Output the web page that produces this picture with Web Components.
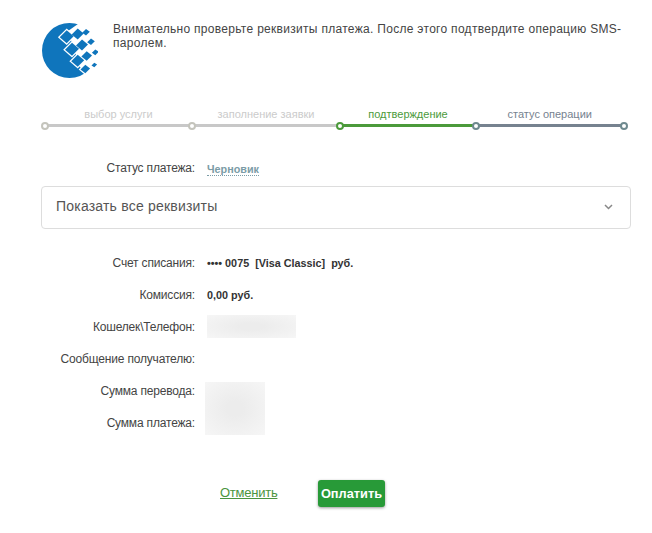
<!DOCTYPE html>
<html lang="ru">
<head>
<meta charset="utf-8">
<title>Подтверждение</title>
<style>
  html, body { margin: 0; background: #fff; }
  body { font-family: "Liberation Sans", Arial, sans-serif; color: #444; }
</style>
</head>
<body>
<wm-page>
  <wm-notice>Внимательно проверьте реквизиты платежа. После этого подтвердите операцию SMS-паролем.</wm-notice>
  <wm-stepper>
    <wm-step state="done">выбор услуги</wm-step>
    <wm-step state="done">заполнение заявки</wm-step>
    <wm-step state="active">подтверждение</wm-step>
    <wm-step state="next" last>статус операции</wm-step>
  </wm-stepper>
  <wm-status label="Статус платежа:">Черновик</wm-status>
  <wm-accordion>Показать все реквизиты</wm-accordion>
  <wm-details>
    <wm-label>Счет списания:</wm-label>
    <wm-value>•••• 0075&nbsp; [Visa Classic]&nbsp; руб.</wm-value>
    <wm-label>Комиссия:</wm-label>
    <wm-value>0,00 руб.</wm-value>
    <wm-label>Кошелек\Телефон:</wm-label>
    <wm-value><wm-blur style="width:89px;height:23px;margin-top:-2px"></wm-blur></wm-value>
    <wm-label>Сообщение получателю:</wm-label>
    <wm-value></wm-value>
    <wm-label>Сумма перевода:</wm-label>
    <wm-value rows="2"><wm-blur style="width:60px;height:53px;margin:2px 0 0 -2px"></wm-blur></wm-value>
    <wm-label>Сумма платежа:</wm-label>
  </wm-details>
  <wm-actions>
    <wm-link>Отменить</wm-link>
    <wm-button>Оплатить</wm-button>
  </wm-actions>
</wm-page>

<script>
function define(name, css, html, init) {
  customElements.define(name, class extends HTMLElement {
    constructor() {
      super();
      this.attachShadow({ mode: 'open' }).innerHTML = `<style>${css}</style>${html}`;
    }
    connectedCallback() {
      if (init) init(this);
    }
  });
}

// logo squares: centre x, centre y, half diagonal
const logoSquares = [
  [24.7, 15.7, 7], [35.7, 13, 6], [44, 11.3, 3.8],
  [30, 28.3, 7], [40, 24, 6], [49, 20.7, 3.8],
  [35.7, 39.7, 6.5], [44.7, 35, 5.3], [53.3, 31.3, 3.4],
  [43.3, 48, 4.8], [52.3, 44, 2.8],
];
const diamond = ([x, y, r], grow, fill) =>
  `<path d="M${x - r - grow} ${y + .5}L${x} ${y - r - grow + .5}L${x + r + grow} ${y - .5}L${x} ${y + r + grow - .5}Z" fill="${fill}"/>`;

define('wm-page', `
  :host { display: block; width: 652px; height: 533px; box-sizing: border-box; padding-top: 21px; overflow: hidden; }
`, `<slot></slot>`);

define('wm-notice', `
  :host { display: flex; padding-left: 42px; height: 59px; gap: 15px; font-size: 12px; line-height: 14px; letter-spacing: .295px; color: #444; }
  svg { flex: none; width: 56px; height: 59px; }
  .text { width: 514px; padding-top: 1px; }
`, `
  <svg viewBox="0 0 56 59">
    <circle cx="27.5" cy="29.5" r="27.5" fill="#0f75bc"/>
    <path d="M26 10L36 3H56V46L46 54L38 46Z" fill="#fff"/>
    ${logoSquares.map((s) => diamond(s, 1.8, '#fff')).join('')}
    ${logoSquares.map((s) => diamond(s, 0, '#0f75bc')).join('')}
  </svg>
  <div class="text"><slot></slot></div>
`);

define('wm-stepper', `
  :host { display: grid; grid-template-columns: 147px 148px 136px 147.5px; margin: 27px 0 0 45px; width: 578.5px; }
`, `<slot></slot>`);

const stepColors = {
  done: ['#cbcbcb', '#c8c8c8', '#c4c4bc'],
  active: ['#4b9a3b', '#4b9a3b', '#4b9a3b'],
  next: ['#76828f', '#76828f', '#6f8a8f'],
};

define('wm-step', `
  :host { display: block; position: relative; height: 24px; font-size: 11px; line-height: 14px; text-align: center; color: var(--label); }
  .bar { position: absolute; left: 0; right: 0; top: 17px; height: 3px; background: var(--line); }
  .dot { position: absolute; top: 14.5px; width: 4px; height: 4px; border: 2px solid var(--node); border-radius: 50%; background: #fff; z-index: 1; }
  .start { left: -4px; }
  .end { right: -4px; display: none; }
  :host([last]) .end { display: block; }
`, `<slot></slot><div class="bar"></div><div class="dot start"></div><div class="dot end"></div>`,
(el) => {
  const [label, line, node] = stepColors[el.getAttribute('state')];
  el.style.setProperty('--label', label);
  el.style.setProperty('--line', line);
  el.style.setProperty('--node', node);
});

define('wm-status', `
  :host { display: flex; align-items: flex-start; gap: 12px; margin-top: 29px; font-size: 12px; letter-spacing: -.18px; line-height: 16px; height: 16px; }
  .label { width: 195px; text-align: right; }
  .value { margin-top: 3px; font-size: 10.8px; letter-spacing: 0; font-weight: bold; color: #7b9ca6; border-bottom: 1px dotted #7b9ca6; line-height: 12px; }
`, `<span class="label"></span><span class="value"><slot></slot></span>`,
(el) => {
  el.shadowRoot.querySelector('.label').textContent = el.getAttribute('label');
});

define('wm-accordion', `
  :host { display: flex; align-items: center; justify-content: space-between; box-sizing: border-box; width: 590px; height: 43px; margin: 10px 0 0 41px; padding: 0 17px 0 14px; border: 1px solid #ddd; border-radius: 4px; font-size: 14px; letter-spacing: .2px; color: #555; }
  .title { margin-top: -4px; }
  svg { width: 9px; height: 6px; margin-top: -1px; }
`, `<span class="title"><slot></slot></span><svg viewBox="0 0 9 6"><path d="M1 1l3.5 3.5L8 1" fill="none" stroke="#888" stroke-width="1.5"/></svg>`);

define('wm-details', `
  :host { display: grid; grid-template-columns: 195px 1fr; grid-auto-rows: 32px; column-gap: 12px; margin-top: 18px; }
`, `<slot></slot>`);

define('wm-label', `
  :host { display: flex; align-items: center; justify-content: flex-end; font-size: 12px; letter-spacing: -.18px; color: #444; }
`, `<slot></slot>`);

define('wm-value', `
  :host { display: flex; align-items: center; font-size: 10.8px; font-weight: bold; color: #333; }
  :host([rows="2"]) { grid-row: span 2; }
`, `<slot></slot>`);

define('wm-blur', `
  :host { display: block; background: radial-gradient(ellipse at center, #ececec 20%, #f6f6f6 100%); }
`, ``);

define('wm-actions', `
  :host { display: flex; align-items: center; margin: 41px 0 0 220px; gap: 41px; }
`, `<slot></slot>`);

define('wm-link', `
  :host { display: block; width: 57px; font-size: 13px; letter-spacing: -.25px; color: #4a9440; text-decoration: underline; margin-top: -3px; }
`, `<slot></slot>`);

define('wm-button', `
  :host { display: flex; align-items: center; justify-content: center; width: 67px; height: 27px; border-radius: 3px; background: #289a38; color: #fff; font-size: 12.8px; font-weight: bold; box-shadow: 0 1px 3px rgba(0,0,0,.4); }
`, `<slot></slot>`);
</script>
</body>
</html>
